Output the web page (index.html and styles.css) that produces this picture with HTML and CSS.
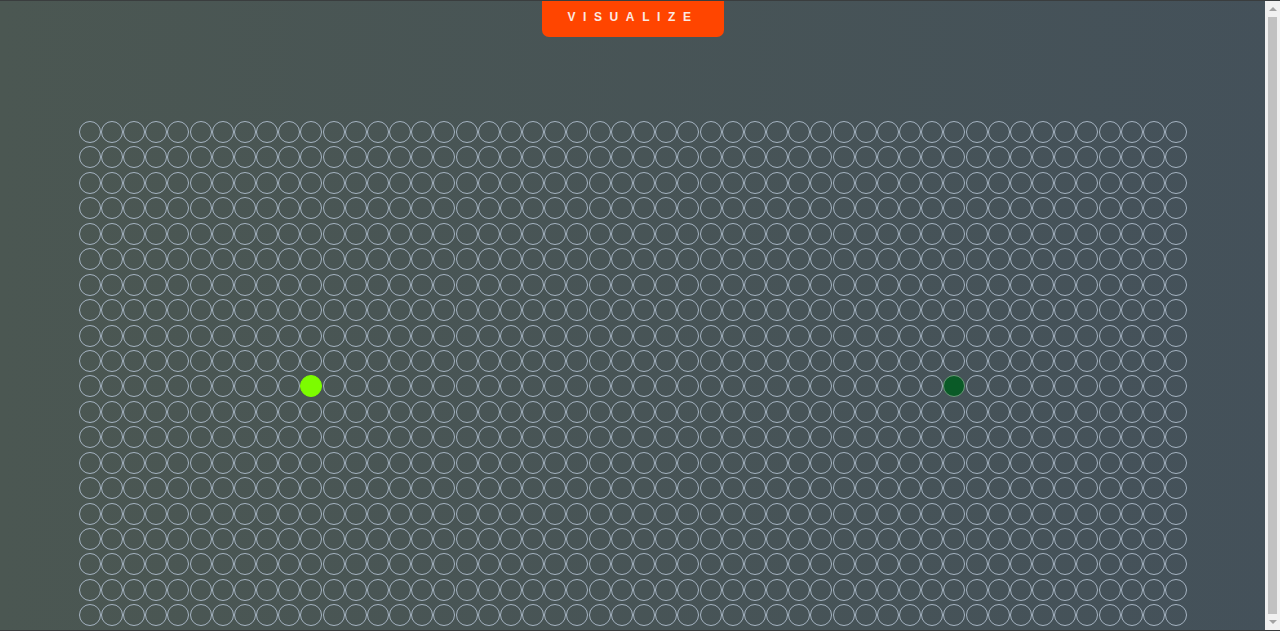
FILE: index.html
```html
<!DOCTYPE html>
<html lang="en">
<head>
<meta charset="utf-8">
<title>Pathfinding Visualizer</title>
<link rel="stylesheet" href="styles.css">
</head>
<body>
<header class="topbar">
  <button class="visualize-btn" type="button">VISUALIZE</button>
</header>
<main class="board">
  <div class="grid" id="grid"></div>
</main>
<div class="scrollbar" aria-hidden="true">
  <span class="arrow arrow-up"></span>
  <span class="thumb"></span>
  <span class="arrow arrow-down"></span>
</div>
<div class="bottom-edge" aria-hidden="true"></div>
<script src="script.js"></script>
</body>
</html>
```
FILE: styles.css
```css
html {
  background: linear-gradient(to right, #4b5752, #44515a);
  min-height: 100%;
}
body {
  margin: 0;
  padding-right: 15px;
  font-family: "Liberation Sans", Arial, sans-serif;
  border-top: 1px solid #3a3d3e;
}
.topbar {
  display: flex;
  justify-content: center;
  padding-left: 1px;
}
.visualize-btn {
  width: 182px;
  height: 36px;
  border: none;
  border-radius: 0 0 7px 7px;
  background: #ff4500;
  color: #fbe9e2;
  font-family: "Liberation Sans", Arial, sans-serif;
  font-weight: bold;
  font-size: 12px;
  letter-spacing: 7.6px;
  padding: 0 0 5px 0;
  cursor: pointer;
}
.board {
  display: flex;
  justify-content: center;
  padding-top: 84px;
  padding-bottom: 10px;
}
.grid {
  display: grid;
  grid-template-columns: repeat(50, 22.18px);
  grid-auto-rows: 25.45px;
  padding-left: 1px;
}
.node {
  width: 22px;
  height: 22px;
  box-sizing: border-box;
  border: 1px solid #a5b3c1;
  border-radius: 50%;
}
.node-start {
  background: #7cfc00;
  border-color: #7cfc00;
}
.node-end {
  background: #0a5a27;
  border-color: #6a9878;
}
.scrollbar {
  position: fixed;
  top: 1px;
  right: 0;
  bottom: 1px;
  width: 15px;
  background: #f1f1f1;
  display: flex;
  flex-direction: column;
  align-items: center;
}
.arrow {
  width: 0;
  height: 0;
  border-left: 4px solid transparent;
  border-right: 4px solid transparent;
}
.arrow-up {
  margin: 6px 0 5px;
  border-bottom: 4px solid #a3a3a3;
}
.arrow-down {
  margin: 5px 0 6px;
  border-top: 4px solid #a3a3a3;
}
.thumb {
  flex: 1;
  width: 9px;
  margin: 1px 0;
  background: #c1c1c1;
}
.bottom-edge {
  position: fixed;
  left: 0;
  right: 0;
  bottom: 0;
  height: 1px;
  background: #3a3d3e;
}
```
FILE: script.js
```js
(function () {
  var grid = document.getElementById('grid');
  var rows = 21, cols = 50;
  var frag = document.createDocumentFragment();
  for (var r = 0; r < rows; r++) {
    for (var c = 0; c < cols; c++) {
      var d = document.createElement('div');
      d.className = 'node';
      if (r === 10 && c === 10) d.className += ' node-start';
      if (r === 10 && c === 39) d.className += ' node-end';
      frag.appendChild(d);
    }
  }
  grid.appendChild(frag);
})();
```
